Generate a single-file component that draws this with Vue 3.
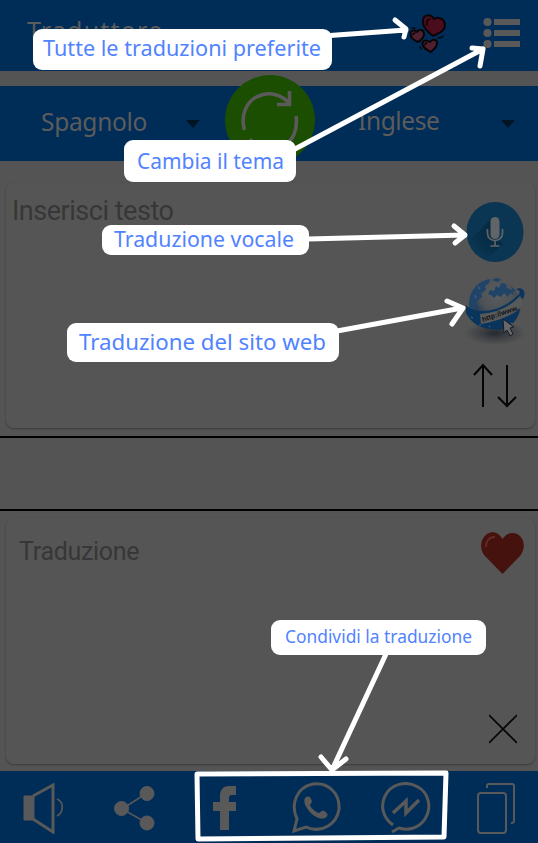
<script setup>
const callouts = [
  { text: 'Tutte le traduzioni preferite', x: 33, y: 29, w: 299, h: 41, tx: 43, ty: 56, tw: 278, size: 22 },
  { text: 'Cambia il tema', x: 124, y: 140, w: 172, h: 42, tx: 137, ty: 169, tw: 147, size: 22 },
  { text: 'Traduzione vocale', x: 102, y: 225, w: 207, h: 30, tx: 114, ty: 247, tw: 180, size: 22 },
  { text: 'Traduzione del sito web', x: 67, y: 323, w: 272, h: 39, tx: 79, ty: 350, tw: 247, size: 22.5 },
  { text: 'Condividi la traduzione', x: 271, y: 620, w: 215, h: 35, tx: 285, ty: 643, tw: 187, size: 18 }
]
const arrows = [
  'M330 35.500 L406 30 M395 20 L406 29 L404 37',
  'M295 149 L483 49 M472 48 L483 49 L480 66',
  'M308 239 L465 235 M454 226 L465 235 L455 243',
  'M337 331 L462 308 M447 301 L463 308 L452 324',
  'M386 654 L332 770 M321 757 L332 770 L346 759'
]
</script>

<template>
  <div class="screen">
    <header class="topbar">
      <h1 class="title">Traduttore</h1>
      <svg class="hearts" width="38" height="40" viewBox="0 0 38 40" stroke="#080508" stroke-width="2" stroke-linejoin="round" stroke-linecap="round">
        <path d="M24 22C19 18 13 13 14 6C15 0 22 0 25 5C29 2 36 5 36 11C36 18 29 19 24 22Z" fill="#4b0d1b" />
        <path d="M9 28C5 26 1 24 1.500 19C2 16 6 16 8 18C10 14 15 16 15 20C15 25 11 26 9 28Z" fill="#51202f" />
        <path d="M22 38C18 36 13 34 13.500 29C14 26 18 26 21 28C24 24 29 26 28 30C27 35 23 36 22 38Z" fill="#51202f" />
        <path d="M18 11q-1-5 3-6M4 21q0-2 2-2M16 31q0-2 2-2M3 14l3 .2M29 24q4 0 5-2M11 33l1 2" fill="none" stroke-width="1.500" />
      </svg>
      <svg class="list" width="38" height="32" viewBox="0 0 38 32" fill="#595959">
        <circle cx="4.500" cy="5" r="4.100" /><circle cx="4.500" cy="16" r="4.100" /><circle cx="4.500" cy="27" r="4.100" />
        <path d="M11 2h26v6H11zM11 13h26v6H11zM11 24h26v6H11z" />
      </svg>
    </header>

    <section class="languages">
      <span class="source">Spagnolo</span>
      <svg class="caret" width="14" height="8" viewBox="0 0 14 8"><path d="M0 0h14L7 8z" fill="#001424" /></svg>
      <span class="swap">
        <svg width="90" height="90" viewBox="0 0 90 90" fill="none" stroke="#5a5a5a" stroke-width="3.600">
          <circle cx="45" cy="45" r="45" fill="#1b4e00" stroke="none" />
          <path d="M19.500 55C15 40 22 25 34 21C45 16 57 20 65 29M64.500 16v13.500H52M71 41C73 55 68 67 56 72C44 77 32 73 25 64" />
        </svg>
      </span>
      <span class="target">Inglese</span>
      <svg class="caret last" width="14" height="8" viewBox="0 0 14 8"><path d="M0 0h14L7 8z" fill="#001424" /></svg>
    </section>

    <section class="card input-card">
      <p class="prompt">Inserisci testo</p>
      <div class="tools">
        <svg width="58" height="61" viewBox="0 0 58 61">
          <defs>
            <linearGradient id="mic-shadow" x1="1" y1="0" x2="0" y2="1"><stop offset="0" stop-color="#04243a" /><stop offset="1" stop-color="#0a3653" /></linearGradient>
          </defs>
          <ellipse cx="29" cy="30" rx="28.500" ry="30" fill="#0a3653" />
          <path d="M25 17L6 36Q9 48 23 55L37 42L31 36Z" fill="url(#mic-shadow)" />
          <rect x="24.500" y="15" width="9" height="22" rx="4.500" fill="#626568" />
          <path d="M21.500 27v4c0 10 15 10 15 0v-4M29 39v5M24.500 44h9" fill="none" stroke="#626568" stroke-width="1.700" />
        </svg>
        <svg class="globe" width="62" height="71" viewBox="0 0 62 71">
          <defs>
            <radialGradient id="floor"><stop offset="0" stop-color="#252a31" /><stop offset=".55" stop-color="#414346" /><stop offset="1" stop-color="#545454" /></radialGradient>
            <radialGradient id="ball" cx=".55" cy=".3"><stop offset="0" stop-color="#5c5e60" /><stop offset=".7" stop-color="#4d5155" /><stop offset="1" stop-color="#233f5b" /></radialGradient>
          </defs>
          <ellipse cx="31" cy="57" rx="30" ry="12" fill="url(#floor)" />
          <circle cx="30" cy="27.500" r="25" fill="url(#ball)" />
          <path d="M6 24C8 11 17 4 26 3L25 7L21 10L22 14L17 17L18 21L13 25L12 32L9 34L5 31ZM24 18l2-4 4 1 2-5 3 2 2-5 5 1 1 4 5 2 2 5-4-2-2 4-4-4-3 4-4-2-3 3-3-3zM28 4l4-2 5 1-3 3zM47 10l5 5-3 1z" fill="#1f4468" />
          <path d="M2 29C11 40 38 35 52 21C57 17 57 15 52 13C60 10 63 18 58 24L56 34C52 51 38 56 26 53C16 52 7 47 2 37Z" fill="#09345b" />
          <path d="M16 38Q40 37 56 20Q60 24 58 31Q43 44 17 48Z" fill="#58595b" />
          <text x="19" y="46" transform="rotate(-19 19 46)" class="url" textLength="38">http://www.</text>
          <path d="M7 41l2 1M15 49l2 0M25 50l1 1M14 11l2 2M11 19l1 3M47 47l2 1" stroke="#4b6078" stroke-width="1.200" />
          <path d="M39 43L40 57L43 54L46 60L49 58L46 52L50 51Z" fill="#686868" stroke="#161c23" />
        </svg>
        <svg class="arrows" width="44" height="46" viewBox="0 0 44 46" fill="none" stroke="#050505" stroke-width="2">
          <path d="M10 44V2M1 12L10 2L19 12M34 2V44M25 34L34 43L43 34" />
        </svg>
      </div>
    </section>

    <div class="divider-space"></div>

    <section class="card output-card">
      <p class="result">Traduzione</p>
      <div class="result-tools">
        <svg width="43" height="42" viewBox="0 0 43 42">
          <path d="M21.500 42L4 24C-2 17-1 7 6 2C12-2 18 1 21.500 7C26 0 34-1 39 4C45 10 43 19 39 24Z" fill="#45120d" />
          <path d="M5 15C5 9 8 5 14 5" fill="none" stroke="#602d27" stroke-width="1.800" />
        </svg>
        <svg class="close" width="28" height="30" viewBox="0 0 28 30" stroke="#050505" stroke-width="1.600"><path d="M0 1L28 29M28 1L0 29" /></svg>
      </div>
    </section>

    <footer class="actions">
      <svg width="42" height="52" viewBox="0 0 42 52" fill="none" stroke="#595959">
        <path d="M1 14H11V38H1Z" fill="#595959" />
        <path d="M10 14L30 3V50L10 37" stroke-width="3" /><path d="M34 17C41 20 41 30 34 34" stroke-width="1.700" />
      </svg>
      <svg width="42" height="52" viewBox="0 0 42 52" fill="#595959" stroke="#595959">
        <path d="M33 11L8 27L33 41" fill="none" stroke-width="1.500" />
        <circle cx="33" cy="11.500" r="7" /><circle cx="7.500" cy="26.500" r="7" /><circle cx="33" cy="41" r="7" />
      </svg>
      <svg width="25" height="52" viewBox="0 0 25 52"><path d="M8 48V29H1V20H8V14C8 7 12 4 17 4H24V13H20C18 13 17 14 17 16V20H24V29H17V48Z" fill="#595959" /></svg>
      <svg width="50" height="52" viewBox="0 0 50 52" fill="none" stroke="#595959" stroke-width="3">
        <path d="M3 49L6 37C-1 22 6 5 22 2C37 0 49 11 48 27C46 42 31 52 15 45Z" />
        <path d="M15 15C12 17 13 23 18 29C23 35 30 38 34 36C38 34 37 31 33 29C31 28 30 30 28 31C24 30 20 26 19 23C20 21 22 20 20 17C19 14 17 14 15 15Z" fill="#595959" stroke="none" />
      </svg>
      <svg width="50" height="52" viewBox="0 0 50 52" fill="none" stroke="#595959" stroke-width="3">
        <path d="M12 43C2 36-1 24 4 14C10 2 25-2 37 5C48 11 51 26 44 37C38 46 28 49 18 46L11 50" />
        <path d="M12 31L25 19V31L38 18" stroke-width="3.500" />
      </svg>
      <svg width="39" height="52" viewBox="0 0 39 52" fill="none" stroke="#595959" stroke-width="2">
        <rect x="1" y="11" width="28" height="40" rx="3" /><path d="M10 6V4Q10 2 12 2H35Q37 2 37 4V39Q37 41 34 41" />
      </svg>
    </footer>

    <svg class="annotations" viewBox="0 0 538 843" width="538" height="843">
      <g class="arrow-lines"><path v-for="a in arrows" :key="a" :d="a" /><path d="M197 774L446 773L444 837L198 839Z" /></g>
      <g v-for="c in callouts" :key="c.text">
        <rect :x="c.x" :y="c.y" :width="c.w" :height="c.h" rx="9" fill="#fff" />
        <text class="callout-text" :x="c.tx" :y="c.ty" :font-size="c.size" :textLength="c.tw" lengthAdjust="spacingAndGlyphs">{{ c.text }}</text>
      </g>
    </svg>
  </div>
</template>

<style>
body { margin: 0; background: #545454; }
</style>

<style scoped>
.screen { position: relative; width: 538px; height: 843px; overflow: hidden; display: flex; flex-direction: column; background: #545454; font-family: "Noto Sans", sans-serif; color: #5c5c5c; }
.screen svg { display: block; flex: none; }
.topbar { box-sizing: border-box; height: 71px; flex: none; display: flex; align-items: flex-start; padding: 14px 17px 0 27px; background: #002d57; }
.title { margin: 0; width: 382px; font-size: 25px; line-height: 32px; font-weight: 400; letter-spacing: 1.200px; }
.list { margin: 3px 0 0 auto; }
.languages { height: 75px; flex: none; margin-top: 15px; display: flex; align-items: center; background: #002d57; font-size: 24.500px; }
.source { width: 146px; padding-left: 41px; box-sizing: border-box; white-space: nowrap; margin-top: -5px; letter-spacing: -.3px; }
.languages .source + .caret { margin-left: 40px; }
.caret { margin-top: 1px; }
.swap { width: 90px; margin-left: 25px; margin-top: -7px; }
.target { width: 100px; margin-left: 43px; margin-top: -6px; letter-spacing: -.4px; }
.languages .last { margin-left: 43px; }
.card { box-sizing: border-box; flex: none; width: 529px; margin-left: 6px; border-radius: 8px; background: #555; box-shadow: 0 1px 2px #3b3b3b; display: flex; justify-content: space-between; font-family: Roboto, sans-serif; color: #373737; }
.input-card { height: 245px; margin-top: 22px; padding: 19px 9px 0 6px; }
.prompt { margin: -7px 0 0; font-size: 27px; line-height: 32px; letter-spacing: -.480px; }
.tools { width: 62px; display: flex; flex-direction: column; align-items: flex-start; }
.tools > svg:first-child { margin-left: 2px; }
.globe { margin-top: 13px; }
.url { font: bold 7px "Liberation Sans", sans-serif; fill: #101214; }
.arrows { margin: 16px 0 0 9px; }
.divider-space { height: 71px; flex: none; margin-top: 8px; border-top: 2px solid #000; border-bottom: 2px solid #000; }
.output-card { height: 246px; margin-top: 7px; padding: 14px 11px 0 13px; }
.result { margin: 5px 0 0; font-size: 25px; line-height: 30px; letter-spacing: -.300px; }
.result-tools { display: flex; flex-direction: column; align-items: flex-end; }
.close { margin: 140px 7px 0 0; }
.actions { box-sizing: border-box; height: 72px; flex: none; margin-top: auto; padding: 11px 21px 0 23px; display: grid; grid-template-columns: 91px 98px 79px 90px 96px 39px; align-items: start; background: #002d57; }
.annotations { position: absolute; inset: 0; }
.arrow-lines { fill: none; stroke: #fff; stroke-width: 5; stroke-linecap: round; stroke-linejoin: round; }
.callout-text { fill: #5183ff; font-family: "Noto Sans", sans-serif; }
</style>
